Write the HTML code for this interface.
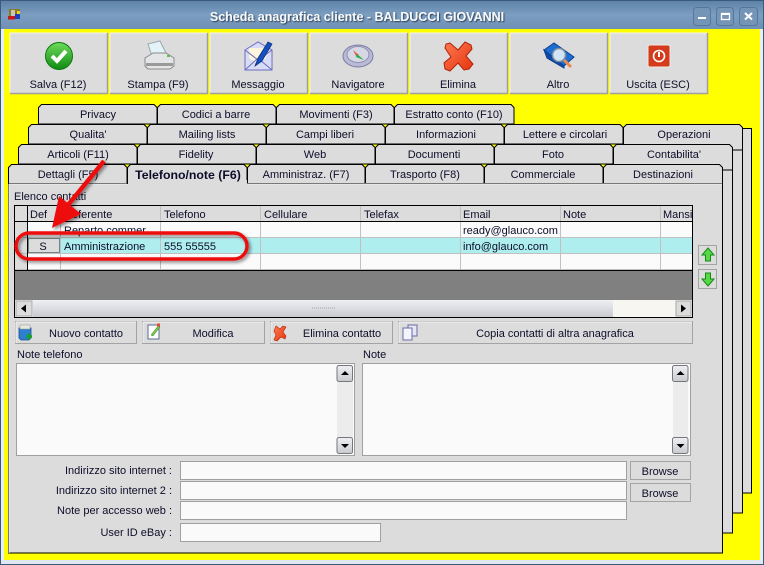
<!DOCTYPE html>
<html><head><meta charset="utf-8"><title>Scheda anagrafica cliente</title>
<style>
html,body{margin:0;padding:0;background:#dfe8f0;width:764px;height:565px;overflow:hidden}
svg{display:block}
text{font-family:"Liberation Sans",sans-serif;font-size:11px;fill:#0d0d2a}
.m{text-anchor:middle}.r{text-anchor:end}
.t{fill:#dcdcdc;stroke:#000;stroke-width:1}
.b{fill:#dcdcdc;stroke:#a3a3a3;stroke-width:1}
.i{fill:#fafafa;stroke:#a0a0a0;stroke-width:1}
.gl{stroke:#c0c0c0;stroke-width:1;fill:none}
</style></head><body>
<svg width="764" height="565" viewBox="0 0 764 565" xmlns="http://www.w3.org/2000/svg">
<defs>
<linearGradient id="tb" x1="0" y1="0" x2="0" y2="1"><stop offset="0" stop-color="#5f83a8"/><stop offset=".5" stop-color="#7c9ec1"/><stop offset="1" stop-color="#6d90b4"/></linearGradient>
<linearGradient id="gr" x1="0" y1="0" x2="0" y2="1"><stop offset="0" stop-color="#6edb5a"/><stop offset="1" stop-color="#0f8a12"/></linearGradient>
<linearGradient id="rd" x1="0" y1="0" x2="1" y2="1"><stop offset="0" stop-color="#ff7a50"/><stop offset="1" stop-color="#e5330f"/></linearGradient>
<linearGradient id="sb" x1="0" y1="0" x2="0" y2="1"><stop offset="0" stop-color="#eef0f4"/><stop offset="1" stop-color="#c8cad0"/></linearGradient>
<filter id="sh" x="-20%" y="-40%" width="140%" height="180%"><feDropShadow dx="2" dy="2" stdDeviation="1.5" flood-color="#000" flood-opacity=".45"/></filter>
<filter id="ts" x="-5%" y="-40%" width="110%" height="180%"><feDropShadow dx="1" dy="1" stdDeviation=".6" flood-color="#22384e" flood-opacity=".9"/></filter>
</defs>

<!-- window frame -->
<rect x="0" y="0" width="764" height="565" fill="#dfe8f0"/>
<rect x="0.5" y="0.5" width="763" height="564" fill="none" stroke="#3a5a78"/>
<rect x="1" y="1" width="762" height="28" fill="url(#tb)"/>
<rect x="4" y="29" width="756" height="531" fill="#ffff00"/>
<rect x="1" y="29" width="3" height="531" fill="#e6eef6"/>
<rect x="760" y="29" width="3" height="531" fill="#e6eef6"/>

<!-- app icon -->
<g><rect x="9" y="9" width="11" height="7" fill="#8a7a28"/><rect x="11" y="10" width="4" height="7" fill="#c8c8b0"/><rect x="8" y="16" width="7" height="3.500" fill="#c81818"/><rect x="15" y="14" width="5" height="5" fill="#1840c0"/><rect x="17" y="11" width="3" height="3" fill="#f0d020"/></g>

<text x="357" y="21" class="m" filter="url(#ts)" style="font-weight:bold;font-size:12.5px;fill:#f6f8fa;">Scheda anagrafica cliente - BALDUCCI GIOVANNI</text>

<!-- window buttons -->
<g fill="#7595b7" stroke="#54779b"><rect x="693.500" y="7.500" width="17" height="18" rx="3"/><rect x="716.500" y="7.500" width="17" height="18" rx="3"/><rect x="739.500" y="7.500" width="18" height="18" rx="3"/></g>
<rect x="698" y="17" width="8" height="2" fill="#fff"/>
<rect x="721.500" y="13.500" width="8" height="6" fill="none" stroke="#fff" stroke-width="1.300"/><rect x="721" y="13" width="9" height="2" fill="#fff"/>
<path d="M745 13l7 6.500M752 13l-7 6.500" stroke="#fff" stroke-width="2"/>

<!-- toolbar buttons -->
<g>
<rect x="10" y="33" width="97" height="60" fill="#dcdcdc"/><path d="M10 93V33h97" fill="none" stroke="#f2f2f2"/><path d="M10 93.500h97.500V33" fill="none" stroke="#a0a0a0" stroke-width="1.500"/>
<rect x="110" y="33" width="97" height="60" fill="#dcdcdc"/><path d="M110 93V33h97" fill="none" stroke="#f2f2f2"/><path d="M110 93.500h97.500V33" fill="none" stroke="#a0a0a0" stroke-width="1.500"/>
<rect x="210" y="33" width="97" height="60" fill="#dcdcdc"/><path d="M210 93V33h97" fill="none" stroke="#f2f2f2"/><path d="M210 93.500h97.500V33" fill="none" stroke="#a0a0a0" stroke-width="1.500"/>
<rect x="310" y="33" width="97" height="60" fill="#dcdcdc"/><path d="M310 93V33h97" fill="none" stroke="#f2f2f2"/><path d="M310 93.500h97.500V33" fill="none" stroke="#a0a0a0" stroke-width="1.500"/>
<rect x="410" y="33" width="97" height="60" fill="#dcdcdc"/><path d="M410 93V33h97" fill="none" stroke="#f2f2f2"/><path d="M410 93.500h97.500V33" fill="none" stroke="#a0a0a0" stroke-width="1.500"/>
<rect x="510" y="33" width="97" height="60" fill="#dcdcdc"/><path d="M510 93V33h97" fill="none" stroke="#f2f2f2"/><path d="M510 93.500h97.500V33" fill="none" stroke="#a0a0a0" stroke-width="1.500"/>
<rect x="610" y="33" width="97" height="60" fill="#dcdcdc"/><path d="M610 93V33h97" fill="none" stroke="#f2f2f2"/><path d="M610 93.500h97.500V33" fill="none" stroke="#a0a0a0" stroke-width="1.500"/>
<text x="58" y="88" class="m">Salva (F12)</text>
<text x="158" y="88" class="m">Stampa (F9)</text>
<text x="258" y="88" class="m">Messaggio</text>
<text x="358" y="88" class="m">Navigatore</text>
<text x="458" y="88" class="m">Elimina</text>
<text x="558" y="88" class="m">Altro</text>
<text x="658" y="88" class="m">Uscita (ESC)</text>
</g>

<!-- save icon -->
<circle cx="59" cy="56" r="13.500" fill="url(#gr)" stroke="#0c7a10"/>
<path d="M52 56l5 5 9-10" fill="none" stroke="#fff" stroke-width="4"/>
<!-- print icon -->
<path d="M148 44l12-3 6 12-14 3z" fill="#e4f2fa" stroke="#9aa"/>
<path d="M145 58l8-5h13l8 5v8l-4 3h-22l-3-3z" fill="#e4e5e6" stroke="#8a8a8a"/>
<rect x="146" y="63" width="27" height="3" fill="#9a9a9a"/>
<rect x="167" y="55" width="3" height="2" fill="#5ec04a"/>
<!-- message icon -->
<path d="M245 50l13-8 14 8v20h-27z" fill="#d9dcf6" stroke="#6a6cc0"/>
<path d="M249 48h17v10l-8 6-9-6z" fill="#fdf5dc"/>
<path d="M245 70l12-11 3 1 12 10M245 50l13 10 14-10" fill="none" stroke="#6a6cc0"/>
<path d="M255 66l3-8 10-16 4 2-10 17z" fill="#1450c0" stroke="#0a2a70" stroke-width=".7"/>
<!-- compass icon -->
<ellipse cx="358" cy="56" rx="15" ry="11" fill="#b8bad6" stroke="#7a7ca4"/>
<ellipse cx="358" cy="54.500" rx="11" ry="8" fill="#d6d8e6" stroke="#8e90b0"/>
<path d="M353 50l6 5-3 1z" fill="#e85a40"/>
<path d="M357 54l7 6-8-3z" fill="#28b040"/>
<!-- delete icon -->
<path d="M450 43l8 7 7-8 6 3 1 4-6 7 7 8-4 5-5 1-6-7-8 8-5-2-1-6 7-6-6-9 1-4z" fill="url(#rd)" stroke="#b02408"/>
<!-- more icon -->
<path d="M544 50l10-7 20 14-10 9z" fill="#1c6fd0" stroke="#0c3d90"/>
<path d="M544 50l3 8 17 10v-2z" fill="#0c4ba8" stroke="#0c3d90"/>
<circle cx="559" cy="55" r="6.500" fill="#cfe4f6" stroke="#7d8c9c" stroke-width="1.500"/>
<path d="M564 60l7 7" stroke="#e88a50" stroke-width="3"/>
<!-- exit icon -->
<rect x="648" y="45" width="22" height="22" rx="2" fill="#d43a1c" stroke="#f0e8e4"/>
<circle cx="659" cy="56" r="5.500" fill="none" stroke="#fff" stroke-width="1.600"/>
<rect x="658" y="52" width="2" height="5" fill="#fff"/>

<!-- tab rows: back to front -->
<!-- row 4 -->
<path class="t" d="M38.500 124V107.500l3-3H154l3 3V124z"/>
<path class="t" d="M157.500 124V107.500l3-3H273l3 3V124z"/>
<path class="t" d="M276.500 124V107.500l3-3H391l3 3V124z"/>
<path class="t" d="M394.500 124V107.500l3-3H511l3 3V124z"/>
<rect class="t" x="700" y="128.500" width="51.500" height="364.500"/>
<text x="98" y="118" class="m">Privacy</text>
<text x="216" y="118" class="m">Codici a barre</text>
<text x="336" y="118" class="m">Movimenti (F3)</text>
<text x="454" y="118" class="m">Estratto conto (F10)</text>
<!-- row 3 -->
<rect class="t" x="650" y="140" width="92.500" height="373"/>
<path class="t" d="M28.500 144V127.500l3-3H144l3 3V144z"/>
<path class="t" d="M147.500 144V127.500l3-3H263l3 3V144z"/>
<path class="t" d="M266.500 144V127.500l3-3H382l3 3V144z"/>
<path class="t" d="M385.500 144V127.500l3-3H501l3 3V144z"/>
<path class="t" d="M504.500 144V127.500l3-3H620l3 3V144z"/>
<path class="t" d="M623.500 150V127.500l3-3H739.500l3 3V150z"/>
<text x="88" y="138" class="m">Qualita'</text>
<text x="207" y="138" class="m">Mailing lists</text>
<text x="325" y="138" class="m">Campi liberi</text>
<text x="446" y="138" class="m">Informazioni</text>
<text x="565" y="138" class="m">Lettere e circolari</text>
<text x="684" y="138" class="m">Operazioni</text>
<!-- row 2 -->
<rect class="t" x="640" y="160" width="92.500" height="373"/>
<path class="t" d="M18.500 164V147.500l3-3H134l3 3V164z"/>
<path class="t" d="M137.500 164V147.500l3-3H253l3 3V164z"/>
<path class="t" d="M256.500 164V147.500l3-3H372l3 3V164z"/>
<path class="t" d="M375.500 164V147.500l3-3H491l3 3V164z"/>
<path class="t" d="M494.500 164V147.500l3-3H610l3 3V164z"/>
<path class="t" d="M613.500 170V147.500l3-3H729.500l3 3V170z"/>
<text x="78" y="158" class="m">Articoli (F11)</text>
<text x="196" y="158" class="m">Fidelity</text>
<text x="315" y="158" class="m">Web</text>
<text x="434" y="158" class="m">Documenti</text>
<text x="553" y="158" class="m">Foto</text>
<text x="674" y="158" class="m">Contabilita'</text>
<!-- row 1 -->
<path class="t" d="M8.500 184V167.500l3-3H124l3 3V184z"/>
<path class="t" d="M247.500 184V167.500l3-3H362l3 3V184z"/>
<path class="t" d="M365.500 184V167.500l3-3H481l3 3V184z"/>
<path class="t" d="M484.500 184V167.500l3-3H600l3 3V184z"/>
<path class="t" d="M603.500 184V167.500l3-3H719.500l3 3V184z"/>
<rect class="t" x="8.500" y="183.500" width="714" height="369.500"/>
<path class="t" d="M127.500 184V167.500l3-3H244l3 3V184" />
<rect x="128" y="180" width="119" height="5" fill="#dcdcdc"/>
<path d="M9 184h118M247 184h475" stroke="#f0f0f0" fill="none"/>
<path d="M9 553V184" stroke="#f0f0f0" fill="none"/>
<text x="68" y="178" class="m">Dettagli (F5)</text>
<text x="188" y="179" class="m" style="font-weight:bold;font-size:12.300px">Telefono/note (F6)</text>
<text x="306" y="178" class="m">Amministraz. (F7)</text>
<text x="425" y="178" class="m">Trasporto (F8)</text>
<text x="543" y="178" class="m">Commerciale</text>
<text x="663" y="178" class="m">Destinazioni</text>

<!-- grid -->
<text x="14" y="200">Elenco contatti</text>
<rect x="15" y="206" width="677" height="64" fill="#fbfbfb"/>
<rect x="15" y="206" width="677" height="15" fill="#dcdcdc"/>
<rect x="15" y="206" width="13" height="64" fill="#dcdcdc"/>
<rect x="28" y="238" width="664" height="15" fill="#aeeeee"/>
<rect x="15" y="270" width="677" height="30" fill="#808080"/>
<path class="gl" d="M15.500 237.500H692M15.500 253.500H692M15 269.500H692M60.500 206V270M160.500 206V270M260.500 206V270M360.500 206V270M460.500 206V270M560.500 206V270M660.500 206V270"/>
<path d="M15 221.500H692M27.500 206V270M15 270.500H692" stroke="#000" fill="none"/>
<rect x="14.500" y="205.500" width="678" height="112" fill="none" stroke="#000"/>
<rect x="28.500" y="238.500" width="31" height="14" fill="#dcdcdc" stroke="#222" stroke-dasharray="1 1"/>
<g>
<text x="30" y="218">Def</text><text x="64" y="218">Referente</text><text x="164" y="218">Telefono</text><text x="264" y="218">Cellulare</text><text x="364" y="218">Telefax</text><text x="463" y="218">Email</text><text x="563" y="218">Note</text>
<svg x="660" y="206" width="32" height="15"><text x="3" y="12">Mansioni</text></svg>
<text x="64" y="234">Reparto commer</text><text x="463" y="234">ready@glauco.com</text>
<text x="43" y="250" class="m">S</text><text x="64" y="250">Amministrazione</text><text x="164" y="250">555 55555</text><text x="463" y="250">info@glauco.com</text>
</g>
<!-- grid scrollbar -->
<rect x="15" y="300" width="677" height="17" fill="#f8f6f0"/>
<rect x="33" y="300" width="580" height="17" fill="url(#sb)"/>
<rect x="16" y="301" width="16" height="15" fill="#dcdcdc" stroke="#a8a8a8"/>
<rect x="676" y="301" width="15" height="15" fill="#dcdcdc" stroke="#a8a8a8"/>
<path d="M21 308.500l5-4v8z" fill="#000"/><path d="M686 308.500l-5-4v8z" fill="#000"/>
<path d="M312 308h24" stroke="#a0a2a8" stroke-dasharray="1 1"/>

<!-- side arrows -->
<rect class="b" x="698.500" y="245.500" width="18" height="19"/>
<rect class="b" x="698.500" y="269.500" width="18" height="19"/>
<path d="M708 248l6 7h-3.500v6h-5v-6H702z" fill="#58d848" stroke="#128a12"/>
<path d="M708 286l6-7h-3.500v-6h-5v6H702z" fill="#58d848" stroke="#128a12"/>

<!-- action buttons -->
<rect class="b" x="15.500" y="321.500" width="121" height="22"/>
<rect class="b" x="142.500" y="321.500" width="122" height="22"/>
<rect class="b" x="270.500" y="321.500" width="122" height="22"/>
<rect class="b" x="398.500" y="321.500" width="294" height="22"/>
<path d="M16 322h120M16 322v21M143 322h121M143 322v21M271 322h121M271 322v21M399 322h293M399 322v21" stroke="#f4f4f4" fill="none"/>
<text x="86" y="337" class="m">Nuovo contatto</text>
<text x="213" y="337" class="m">Modifica</text>
<text x="342" y="337" class="m">Elimina contatto</text>
<text x="555" y="337" class="m">Copia contatti di altra anagrafica</text>
<!-- small icons -->
<path d="M19 328h12v10l-2 2h-8l-2-2z" fill="#2f7fd0" stroke="#1a4f90" stroke-width=".8"/><rect x="20" y="325" width="10" height="4" fill="#e8e8e0" stroke="#999" stroke-width=".5"/><path d="M26 336.500h6M29 333.500v6" stroke="#18a030" stroke-width="2.500"/>
<rect x="148" y="325" width="11" height="14" fill="#fff" stroke="#5a6a9a"/><path d="M151 335l7-9 2 1-7 9z" fill="#78c850" stroke="#3a7a20" stroke-width=".5"/><rect x="157" y="323.500" width="3" height="3" fill="#e05030"/>
<path d="M276 326l4 3 3-3 3 1-3 5 3 4-1 3-4-2-4 4-3-1 2-5-2-4z" fill="url(#rd)" stroke="#b02408" stroke-width=".6"/>
<rect x="408" y="325" width="9" height="11" fill="#e6e6f4" stroke="#6a6aa8"/><rect x="403" y="328" width="9" height="12" fill="#f4f4fc" stroke="#6a6aa8"/>

<!-- notes -->
<text x="17" y="358">Note telefono</text>
<text x="363" y="358">Note</text>
<rect class="i" x="16.500" y="363.500" width="338" height="92"/>
<rect class="i" x="362.500" y="363.500" width="328" height="92"/>
<rect x="337" y="365" width="16" height="89" fill="#ececec"/>
<rect x="673" y="365" width="15" height="89" fill="#ececec"/>
<rect x="337" y="365.500" width="15.500" height="16" rx="2" fill="url(#sb)" stroke="#777"/>
<rect x="337" y="437.500" width="15.500" height="16" rx="2" fill="url(#sb)" stroke="#777"/>
<rect x="672.500" y="365.500" width="15.500" height="16" rx="2" fill="url(#sb)" stroke="#777"/>
<rect x="672.500" y="437.500" width="15.500" height="16" rx="2" fill="url(#sb)" stroke="#777"/>
<path d="M345 371l4 4h-8zM345 448l4-4h-8zM680.500 371l4 4h-8zM680.500 448l4-4h-8z" fill="#000"/>

<!-- fields -->
<text x="172" y="474" class="r">Indirizzo sito internet :</text>
<text x="172" y="494" class="r">Indirizzo sito internet 2 :</text>
<text x="172" y="514" class="r">Note per accesso web :</text>
<text x="172" y="536" class="r">User ID eBay :</text>
<rect class="i" x="180.500" y="461.500" width="446" height="18"/>
<rect class="i" x="180.500" y="481.500" width="446" height="18"/>
<rect class="i" x="180.500" y="501.500" width="446" height="18"/>
<rect class="i" x="180.500" y="523.500" width="200" height="18"/>
<rect class="b" x="630.500" y="461.500" width="60" height="18"/>
<rect class="b" x="630.500" y="483.500" width="60" height="18"/>
<text x="660" y="475" class="m">Browse</text>
<text x="660" y="497" class="m">Browse</text>

<!-- annotations -->
<g filter="url(#sh)">
<rect x="16" y="233" width="231" height="26" rx="13" fill="none" stroke="#ee1111" stroke-width="3.500"/>
<path d="M104 161l-36 44" stroke="#ee1111" stroke-width="4.500" fill="none"/>
<path d="M52 228l7-32 22 18z" fill="#ee1111"/>
</g>
</svg>
</body></html>
